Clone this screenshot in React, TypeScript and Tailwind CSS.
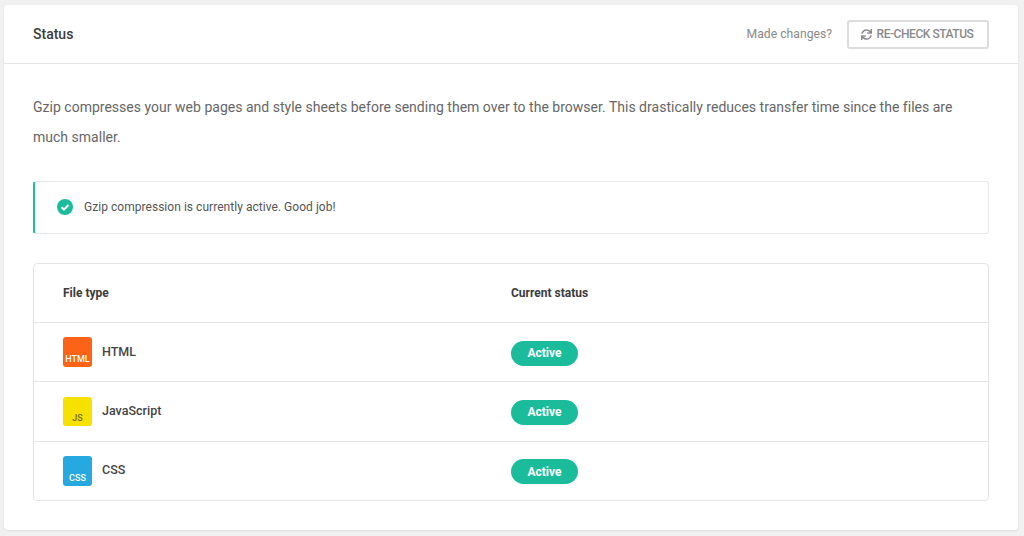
import React from "react";
import { FaSync } from "react-icons/fa";

const fileTypes = [
  { name: "HTML", label: "HTML", bg: "bg-[#fd6316]", fg: "text-white" },
  { name: "JavaScript", label: "JS", bg: "bg-[#f7e100]", fg: "text-[#7a6a10]" },
  { name: "CSS", label: "CSS", bg: "bg-[#25a9e0]", fg: "text-white" },
];

const FileBadge = ({ label, bg, fg }: { label: string; bg: string; fg: string }) => (
  <div className={`w-[29px] h-[29.5px] rounded-[3px] flex items-end justify-center pb-[2px] text-[9px] leading-[12px] font-medium ${bg} ${fg}`}>
    <span>{label}</span>
  </div>
);

const App = () => {
  return (
    <div className="w-[1024px] h-[536px] overflow-hidden bg-[#f1f1f1] pt-[5px] pl-[4px] pr-[6px] font-['Roboto',sans-serif]">
      <div className="h-[525px] bg-white rounded-[4px] shadow-[0_1px_3px_rgba(0,0,0,0.08)]">
        {/* Header */}
        <div className="h-[58px] border-b border-[#e5e5e5] box-content flex items-center justify-between pl-[29px] pr-[29px]">
          <h2 className="text-[14px] font-medium text-[#3c3c3c]">Status</h2>
          <div className="flex items-center gap-[15px]">
            <span className="text-[12.2px] text-[#8a8a8a]">Made changes?</span>
            <button className="w-[142px] h-[29px] border-2 border-[#dcdcdc] rounded-[3px] flex items-center justify-center gap-[5px] pr-[2px] text-[12px] -tracking-[0.45px] font-medium text-[#8a8a8a]">
              <FaSync size={11} />
              RE-CHECK STATUS
            </button>
          </div>
        </div>

        <div className="px-[29px]">
          <p className="pt-[28px] pr-[30px] text-[14px] leading-[30px] tracking-[0.015px] text-[#666666]">
            Gzip compresses your web pages and style sheets before sending them over to the browser. This drastically reduces transfer time since the files are much smaller.
          </p>

          {/* Alert */}
          <div className="mt-[29px] h-[53px] pb-[1px] border border-[#e8e8e8] border-l-2 border-l-[#1abc9c] rounded-[3px] flex items-center pl-[22px] gap-[11px]">
            <svg width="16" height="16" viewBox="0 0 16 16">
              <circle cx="8" cy="8" r="8" fill="#1abc9c" />
              <path d="M4.6 8.2l2.4 2.4 4.4-4.6" fill="none" stroke="#fff" strokeWidth="2" />
            </svg>
            <span className="text-[12px] tracking-[0.04px] text-[#555555]">Gzip compression is currently active. Good job!</span>
          </div>

          {/* Table */}
          <div className="mt-[29px] border border-[#e5e5e5] rounded-[4px]">
            <div className="h-[58px] flex items-center pl-[29px] text-[12px] font-bold text-[#3c3c3c]">
              <div className="w-[448px]">File type</div>
              <div>Current status</div>
            </div>
            {fileTypes.map(t => (
              <div key={t.name} className="h-[59.33px] border-t border-[#e5e5e5] flex items-center pl-[29px]">
                <div className="w-[448px] flex items-center gap-[10px]">
                  <FileBadge label={t.label} bg={t.bg} fg={t.fg} />
                  <span className="text-[12.5px] font-medium text-[#444444]">{t.name}</span>
                </div>
                <span className="mt-[2px] w-[67px] h-[25px] rounded-full bg-[#1abc9c] text-white text-[12px] font-bold flex items-center justify-center">
                  Active
                </span>
              </div>
            ))}
          </div>
        </div>
      </div>
    </div>
  );
};

export default App;
